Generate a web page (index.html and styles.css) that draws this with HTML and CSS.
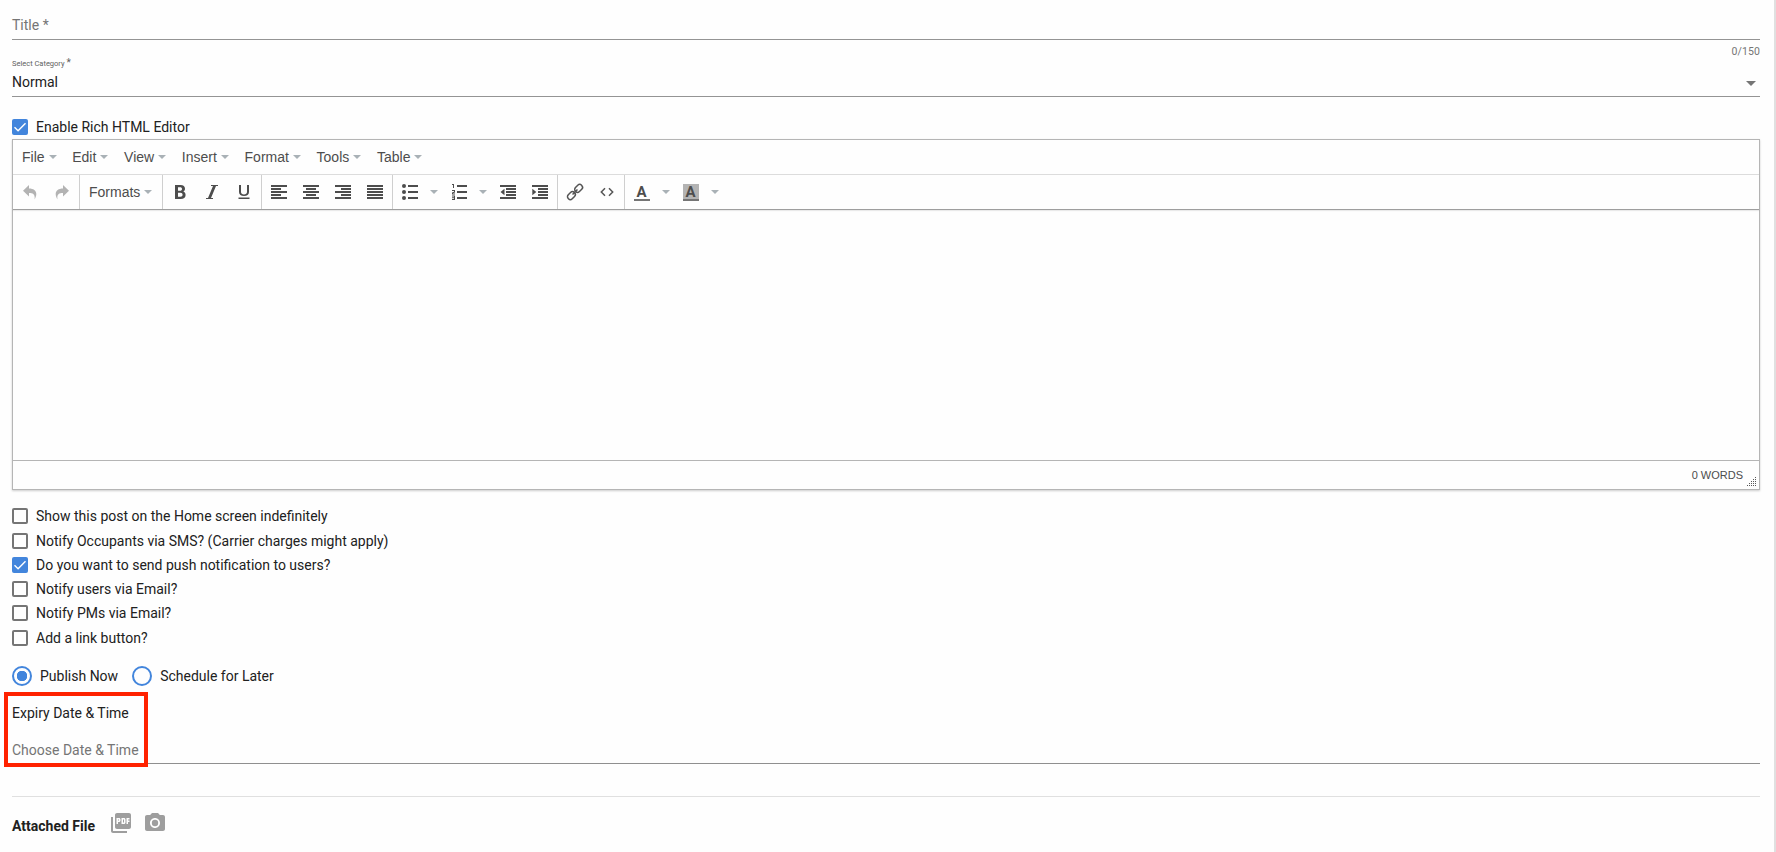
FILE: index.html
```
<!DOCTYPE html>
<html lang="en">
<head>
    <meta charset="UTF-8">
    <meta name="viewport" content="width=device-width, initial-scale=1.0">
    <title>New Post</title>
    <link rel="stylesheet" href="styles.css">
</head>
<body>
    <form class="post-form">
        <div class="field title-field">
            <span class="placeholder">Title *</span>
        </div>
        <div class="counter">0/150</div>
        <div class="field select-field">
            <span class="field-label">Select Category <span class="star">*</span></span>
            <div class="select-value"><span>Normal</span><i class="select-arrow"></i></div>
        </div>

        <div class="check-row rich-row">
            <span class="checkbox checked"><svg viewBox="0 0 16 16"><path d="M2.500 8.200l3.600 3.600 7.400-7.600"/></svg></span>
            <span>Enable Rich HTML Editor</span>
        </div>

        <div class="editor">
            <div class="menubar">
                <span class="menu">File<i class="caret"></i></span>
                <span class="menu">Edit<i class="caret"></i></span>
                <span class="menu">View<i class="caret"></i></span>
                <span class="menu">Insert<i class="caret"></i></span>
                <span class="menu">Format<i class="caret"></i></span>
                <span class="menu">Tools<i class="caret"></i></span>
                <span class="menu">Table<i class="caret"></i></span>
            </div>
            <div class="toolbar">
                <div class="group history">
                    <span class="btn disabled"><svg viewBox="0 0 16 16"><path d="M7 1v3.500c6.500 0 9.500 4.500 5.500 11 .8-4.500-.8-6.500-5.500-6.500v3.500L1 6.700z"/></svg></span>
                    <span class="btn disabled"><svg viewBox="0 0 16 16"><path d="M9 1v3.500c-6.500 0-9.500 4.500-5.500 11-.8-4.500.8-6.500 5.500-6.500v3.500l6-5.800z"/></svg></span>
                </div>
                <div class="group formats">
                    <span class="menu">Formats<i class="caret"></i></span>
                </div>
                <div class="group">
                    <span class="btn"><svg viewBox="0 0 16 16"><path fill-rule="evenodd" d="M3 1h5.500c3 0 4.500 1.500 4.500 3.700 0 1.400-.7 2.400-1.800 2.900 1.500.5 2.400 1.600 2.400 3.300 0 2.600-1.900 4.100-4.900 4.100H3zM6 3.200v3.500h2c1.300 0 2-.6 2-1.800s-.7-1.700-2-1.700zM6 8.800v4h2.400c1.400 0 2.200-.7 2.200-2s-.8-2-2.200-2z"/></svg></span>
                    <span class="btn"><svg viewBox="0 0 16 16"><path d="M14 1v1h-2L7 14h2v1H2v-1h2L9 2H7V1z"/></svg></span>
                    <span class="btn"><svg viewBox="0 0 16 16"><path d="M11 1h2v7c0 2.500-2 4-5 4s-5-1.500-5-4V1h2v7c0 1.500 1.200 2.400 3 2.400s3-.9 3-2.400zM2.500 13.500h11V15h-11z"/></svg></span>
                </div>
                <div class="group">
                    <span class="btn"><svg viewBox="0 0 16 16"><path d="M0 1h16v2H0zM0 4h10v2H0zM0 7h16v2H0zM0 10h10v2H0zM0 13h16v2H0z"/></svg></span>
                    <span class="btn"><svg viewBox="0 0 16 16"><path d="M0 1h16v2H0zM3 4h10v2H3zM0 7h16v2H0zM3 10h10v2H3zM0 13h16v2H0z"/></svg></span>
                    <span class="btn"><svg viewBox="0 0 16 16"><path d="M0 1h16v2H0zM6 4h10v2H6zM0 7h16v2H0zM6 10h10v2H6zM0 13h16v2H0z"/></svg></span>
                    <span class="btn"><svg viewBox="0 0 16 16"><path d="M0 1h16v2H0zM0 4h16v2H0zM0 7h16v2H0zM0 10h16v2H0zM0 13h16v2H0z"/></svg></span>
                </div>
                <div class="group">
                    <span class="btn"><svg viewBox="0 0 16 16"><path d="M6 1h10v2H6zM6 7h10v2H6zM6 13h10v2H6z"/><circle cx="2" cy="2" r="2"/><circle cx="2" cy="8" r="2"/><circle cx="2" cy="14" r="2"/></svg></span>
                    <span class="open"><i class="caret"></i></span>
                    <span class="btn"><svg viewBox="0 0 16 16"><path d="M6 1h10v2H6zM6 7h10v2H6zM6 13h10v2H6zM2 0h1v4H2V1H1V0zM1 6h3v2.500L2 9.300v.2h2v1H1V8.500l2-.8V7H1zM1 11.500h3V16H1v-1h2v-.8H1v-.9h2v-.8H1z"/></svg></span>
                    <span class="open"><i class="caret"></i></span>
                    <span class="btn"><svg viewBox="0 0 16 16"><path d="M0 1h16v2H0zM6 4h10v2H6zM6 7h10v2H6zM6 10h10v2H6zM0 13h16v2H0zM4.500 4.800v6.400L.5 8z"/></svg></span>
                    <span class="btn"><svg viewBox="0 0 16 16"><path d="M0 1h16v2H0zM6 4h10v2H6zM6 7h10v2H6zM6 10h10v2H6zM0 13h16v2H0zM.3 4.800v6.400l4-3.200z"/></svg></span>
                </div>
                <div class="group">
                    <span class="btn"><svg class="outline" viewBox="0 0 16 16"><g transform="rotate(-45 8 8)"><rect x="-1.400" y="5.200" width="8.600" height="5.600" rx="2.700"/><rect x="8.800" y="5.200" width="8.600" height="5.600" rx="2.700"/><path d="M4.500 8h7"/></g></svg></span>
                    <span class="btn"><svg class="outline code" viewBox="0 0 16 16"><path d="M6 4.200L2.300 8 6 11.800M10 4.200L13.700 8 10 11.800"/></svg></span>
                </div>
                <div class="group last">
                    <span class="btn"><span class="letter">A</span></span>
                    <span class="open"><i class="caret"></i></span>
                    <span class="btn"><span class="letter shaded">A</span></span>
                    <span class="open"><i class="caret"></i></span>
                </div>
            </div>
            <div class="edit-area"></div>
            <div class="statusbar">
                <span>0 WORDS</span>
                <svg class="resize" viewBox="0 0 10 10"><path d="M8 0h1v1H8zM6 2h1v1H6zM8 2h1v1H8zM4 4h1v1H4zM6 4h1v1H6zM8 4h1v1H8zM2 6h1v1H2zM4 6h1v1H4zM6 6h1v1H6zM8 6h1v1H8zM0 8h1v1H0zM2 8h1v1H2zM4 8h1v1H4zM6 8h1v1H6zM8 8h1v1H8z"/></svg>
            </div>
        </div>

        <div class="options">
            <div class="check-row"><span class="checkbox"></span><span>Show this post on the Home screen indefinitely</span></div>
            <div class="check-row"><span class="checkbox"></span><span>Notify Occupants via SMS? (Carrier charges might apply)</span></div>
            <div class="check-row"><span class="checkbox checked"><svg viewBox="0 0 16 16"><path d="M2.500 8.200l3.600 3.600 7.400-7.600"/></svg></span><span>Do you want to send push notification to users?</span></div>
            <div class="check-row"><span class="checkbox"></span><span>Notify users via Email?</span></div>
            <div class="check-row"><span class="checkbox"></span><span>Notify PMs via Email?</span></div>
            <div class="check-row"><span class="checkbox"></span><span>Add a link button?</span></div>
        </div>

        <div class="radios">
            <span class="radio selected"></span><span class="radio-label">Publish Now</span>
            <span class="radio"></span><span class="radio-label">Schedule for Later</span>
        </div>

        <div class="expiry">
            <div class="expiry-label">Expiry Date &amp; Time</div>
            <div class="expiry-input">Choose Date &amp; Time</div>
            <div class="highlight"></div>
        </div>

        <div class="attachments">
            <b>Attached File</b>
            <svg class="pdf" viewBox="0 0 24 24"><path d="M20 2H8c-1.100 0-2 .9-2 2v12c0 1.100.9 2 2 2h12c1.100 0 2-.9 2-2V4c0-1.100-.9-2-2-2zm-8.500 7.500c0 .83-.67 1.500-1.500 1.500H9v2H7.500V7H10c.83 0 1.500.67 1.500 1.500v1zm5 2c0 .83-.67 1.500-1.500 1.500h-2.500V7H15c.83 0 1.500.67 1.500 1.500v3zm4-3H19v1h1.500V11H19v2h-1.500V7h3v1.500zM9 9.500h1v-1H9v1zM4 6H2v14c0 1.100.9 2 2 2h14v-2H4V6zm10 5.500h1v-3h-1v3z"/></svg>
            <svg class="camera" viewBox="0 0 24 24"><circle cx="12" cy="12" r="3.200"/><path d="M9 2L7.170 4H4c-1.100 0-2 .9-2 2v12c0 1.100.9 2 2 2h16c1.100 0 2-.9 2-2V6c0-1.100-.9-2-2-2h-3.170L15 2H9zm3 15c-2.760 0-5-2.240-5-5s2.240-5 5-5 5 2.240 5 5-2.240 5-5 5z"/></svg>
        </div>
    </form>
</body>
</html>
```
FILE: styles.css
```
* {
    box-sizing: border-box;
}
body {
    margin: 0;
    height: 852px;
    overflow: hidden;
    background-color: #fefefe;
    border-right: 2px solid #e0e0e0;
    font-family: Roboto, sans-serif;
    font-size: 14px;
    line-height: 16px;
    color: #212121;
}
.post-form {
    padding: 0 14px 0 12px;
}
.field {
    border-bottom: 1px solid #949494;
}
.title-field {
    height: 40px;
    padding-top: 17px;
}
.placeholder {
    color: #757575;
}
.counter {
    height: 17px;
    padding-top: 4px;
    text-align: right;
    font-size: 10.5px;
    letter-spacing: 0.1px;
    color: #757575;
}
.select-field {
    height: 40px;
}
.field-label {
    display: block;
    height: 17px;
    line-height: 13px;
    font-size: 7.5px;
    color: #616161;
}
.star {
    font-size: 10px;
    line-height: 1px;
}
.select-value {
    display: flex;
    justify-content: space-between;
    align-items: center;
}
.select-arrow {
    border: 5px solid transparent;
    border-top-color: #757575;
    border-bottom: 0;
    margin: 2px 4px 0 0;
}
.check-row {
    display: flex;
    align-items: center;
    gap: 8px;
    height: 24.25px;
}
.rich-row {
    height: 16px;
    margin: 22px 0 4px;
}
.checkbox {
    width: 16px;
    height: 16px;
    border: 2px solid #757575;
    border-radius: 2px;
}
.checkbox.checked {
    border: 0;
    background-color: #4285dc;
}
.checkbox svg {
    display: block;
    fill: none;
    stroke: #fff;
    stroke-width: 1.4;
}

/* Rich text editor */
.editor {
    height: 351px;
    border: 1px solid #b5b5b5;
    box-shadow: 0 1px 2px rgba(0, 0, 0, 0.2);
    font-family: "Liberation Sans", Arial, sans-serif;
    color: #4d4d4d;
}
.menubar {
    display: flex;
    gap: 15.7px;
    height: 35px;
    padding-left: 9px;
    border-bottom: 1px solid #dcdcdc;
}
.menu {
    display: flex;
    align-items: center;
}
.caret {
    margin-left: 4px;
    border: 4px solid transparent;
    border-top-color: #a9b1b6;
    border-bottom: 0;
}
.toolbar {
    display: flex;
    height: 35px;
    border-bottom: 1px solid #9e9e9e;
    box-shadow: 0 1px 1px rgba(0, 0, 0, 0.08);
}
.group {
    display: flex;
    align-items: center;
    padding: 0 1.5px 0 0.5px;
    border-right: 1px solid #cfcfcf;
}
.group.history {
    padding: 0 1px;
}
.group.formats {
    width: 83px;
    padding-left: 9px;
}
.group.last {
    border-right: 0;
}
.btn {
    display: flex;
    justify-content: center;
    width: 32px;
}
.btn svg {
    width: 16px;
    height: 16px;
    fill: #4d4d4d;
}
.btn.disabled svg {
    fill: #b3b3b3;
}
.btn svg.outline {
    fill: none;
    stroke: #555;
    stroke-width: 1.5;
    overflow: visible;
}
.open {
    display: flex;
    width: 17px;
}
.letter {
    width: 16px;
    height: 17px;
    border-bottom: 2px solid #757575;
    font-family: Roboto, sans-serif;
    font-weight: bold;
    font-size: 15px;
    line-height: 17px;
    text-align: center;
}
.letter.shaded {
    background-color: #b3b3b3;
}
.edit-area {
    height: 250px;
}
.statusbar {
    display: flex;
    justify-content: flex-end;
    height: 29px;
    padding: 6px 2px 0 0;
    border-top: 1px solid #b5b5b5;
    font-size: 11px;
}
.resize {
    width: 10px;
    height: 10px;
    margin: 10px 0 0 4px;
    fill: #595959;
}

.options {
    padding-top: 14.3px;
}
.radios {
    display: flex;
    align-items: center;
    height: 20px;
    margin-top: 16px;
}
.radio {
    width: 20px;
    height: 20px;
    border: 2px solid #4285dc;
    border-radius: 50%;
}
.radio.selected {
    background: radial-gradient(circle, #4285dc 5px, transparent 5.5px);
}
.radio-label {
    margin: 0 14px 0 8px;
}

.expiry {
    position: relative;
    height: 78px;
    padding-top: 19px;
    border-bottom: 1px solid #8f8f8f;
}
.expiry-input {
    margin-top: 21px;
    color: #757575;
}
/* red frame drawn over the expiry fields */
.highlight {
    position: absolute;
    left: -8px;
    top: 6px;
    width: 144px;
    height: 75px;
    border: 4px solid #ff2200;
}
.attachments {
    display: flex;
    margin-top: 32px;
    padding-top: 14px;
    border-top: 1px solid #e0e0e0;
}
.attachments b {
    margin: 7px 14px 0 0;
}
.attachments svg {
    width: 24px;
    height: 24px;
    margin-right: 10px;
    fill: #9e9e9e;
}
```
